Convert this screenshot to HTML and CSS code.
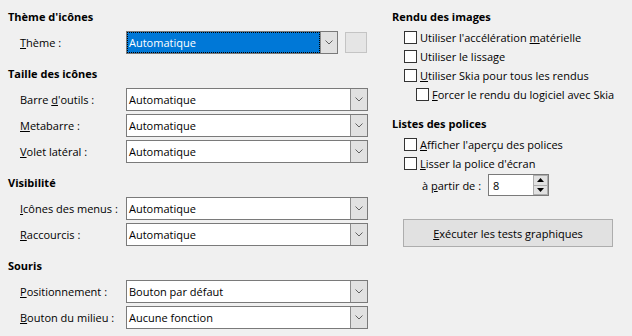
FILE: index.html
```html
<!DOCTYPE html>
<html lang="fr">
<head>
    <meta charset="UTF-8">
    <title>Affichage</title>
    <link rel="stylesheet" href="styles.css">
</head>
<body>
    <div class="page">
        <div class="col col-left">
            <section class="group">
                <h2 class="group-title">Thème d'icônes</h2>
                <div class="field">
                    <span class="field-label"><u>T</u>hème :</span>
                    <div class="combo combo-short focused">
                        <span class="combo-text">Automatique</span>
                        <span class="combo-btn"><svg width="8" height="5" viewBox="0 0 8 5"><polyline points="0.5,0.5 4,4 7.5,0.5" /></svg></span>
                    </div>
                    <button type="button" class="square-btn"></button>
                </div>
            </section>

            <section class="group">
                <h2 class="group-title">Taille des icônes</h2>
                <div class="field">
                    <span class="field-label">Barre <u>d</u>'outils :</span>
                    <div class="combo">
                        <span class="combo-text">Automatique</span>
                        <span class="combo-btn"><svg width="8" height="5" viewBox="0 0 8 5"><polyline points="0.5,0.5 4,4 7.5,0.5" /></svg></span>
                    </div>
                </div>
                <div class="field">
                    <span class="field-label"><u>M</u>etabarre :</span>
                    <div class="combo">
                        <span class="combo-text">Automatique</span>
                        <span class="combo-btn"><svg width="8" height="5" viewBox="0 0 8 5"><polyline points="0.5,0.5 4,4 7.5,0.5" /></svg></span>
                    </div>
                </div>
                <div class="field">
                    <span class="field-label"><u>V</u>olet latéral :</span>
                    <div class="combo">
                        <span class="combo-text">Automatique</span>
                        <span class="combo-btn"><svg width="8" height="5" viewBox="0 0 8 5"><polyline points="0.5,0.5 4,4 7.5,0.5" /></svg></span>
                    </div>
                </div>
            </section>

            <section class="group">
                <h2 class="group-title">Visibilité</h2>
                <div class="field">
                    <span class="field-label"><u>I</u>cônes des menus :</span>
                    <div class="combo">
                        <span class="combo-text">Automatique</span>
                        <span class="combo-btn"><svg width="8" height="5" viewBox="0 0 8 5"><polyline points="0.5,0.5 4,4 7.5,0.5" /></svg></span>
                    </div>
                </div>
                <div class="field">
                    <span class="field-label"><u>R</u>accourcis :</span>
                    <div class="combo">
                        <span class="combo-text">Automatique</span>
                        <span class="combo-btn"><svg width="8" height="5" viewBox="0 0 8 5"><polyline points="0.5,0.5 4,4 7.5,0.5" /></svg></span>
                    </div>
                </div>
            </section>

            <section class="group">
                <h2 class="group-title">Souris</h2>
                <div class="field">
                    <span class="field-label"><u>P</u>ositionnement :</span>
                    <div class="combo">
                        <span class="combo-text">Bouton par défaut</span>
                        <span class="combo-btn"><svg width="8" height="5" viewBox="0 0 8 5"><polyline points="0.5,0.5 4,4 7.5,0.5" /></svg></span>
                    </div>
                </div>
                <div class="field">
                    <span class="field-label"><u>B</u>outon du milieu :</span>
                    <div class="combo">
                        <span class="combo-text">Aucune fonction</span>
                        <span class="combo-btn"><svg width="8" height="5" viewBox="0 0 8 5"><polyline points="0.5,0.5 4,4 7.5,0.5" /></svg></span>
                    </div>
                </div>
            </section>
        </div>

        <div class="col col-right">
            <section class="group">
                <h2 class="group-title tight">Rendu des images</h2>
                <div class="check"><span class="box"></span><span>Utiliser l'accélération <u>m</u>atérielle</span></div>
                <div class="check"><span class="box"></span><span>Utiliser le lissa<u>g</u>e</span></div>
                <div class="check"><span class="box"></span><span><u>U</u>tiliser Skia pour tous les rendus</span></div>
                <div class="check sub"><span class="box"></span><span><u>F</u>orcer le rendu du logiciel avec Skia</span></div>
            </section>

            <section class="group group-fonts">
                <h2 class="group-title tight">Listes des polices</h2>
                <div class="check"><span class="box"></span><span><u>A</u>fficher l'aperçu des polices</span></div>
                <div class="check"><span class="box"></span><span><u>L</u>isser la police d'écran</span></div>
                <div class="spin-row">
                    <span class="spin-label">à <u>p</u>artir de :</span>
                    <div class="spin">
                        <span class="spin-value">8</span>
                        <span class="spin-btns">
                            <span class="spin-up"><svg width="7" height="4" viewBox="0 0 7 4"><polygon points="3.5,0 7,4 0,4" /></svg></span>
                            <span class="spin-down"><svg width="7" height="4" viewBox="0 0 7 4"><polygon points="0,0 7,0 3.5,4" /></svg></span>
                        </span>
                    </div>
                </div>
            </section>

            <button type="button" class="test-btn"><u>E</u>xécuter les tests graphiques</button>
        </div>
    </div>
</body>
</html>
```

FILE: styles.css
```css
/* General Reset */
* {
    margin: 0;
    padding: 0;
    box-sizing: border-box;
}

body {
    font-family: "Open Sans", "Liberation Sans", sans-serif;
    font-size: 11px;
    color: #000;
    background-color: #f0f0f0;
    width: 632px;
    height: 336px;
    overflow: hidden;
}

.page {
    display: flex;
    gap: 24px;
    padding: 9px 0 0 8px;
}

.col-left {
    width: 360px;
}

.col-right {
    width: 232px;
}

.group + .group {
    margin-top: 12px;
}

.group-title {
    font-size: 11px;
    font-weight: 700;
    line-height: 16px;
    margin-bottom: 6px;
}

.group-title.tight {
    margin-bottom: 3px;
}

/* left column: label + combo rows */
.field {
    display: flex;
    align-items: center;
    height: 23px;
    padding-left: 12px;
}

.field + .field {
    margin-top: 3px;
}

.field-label {
    width: 106px;
    white-space: nowrap;
}

.combo {
    display: flex;
    width: 242px;
    height: 23px;
    border: 1px solid #7a7a7a;
    background-color: #fff;
}

.combo-short {
    width: 212px;
}

.combo-text {
    flex: 1;
    display: flex;
    align-items: center;
    padding-left: 2px;
    white-space: nowrap;
}

.combo.focused .combo-text {
    background-color: #0078d7;
    color: #fff;
    outline: 1px dotted #000;
    outline-offset: -1px;
}

.combo-btn {
    width: 17px;
    display: flex;
    align-items: center;
    justify-content: center;
    background-color: #e1e1e1;
    border-left: 1px solid #8c8c8c;
}

.combo-btn svg polyline {
    fill: none;
    stroke: #606060;
    stroke-width: 1;
}

.square-btn {
    width: 22px;
    height: 21px;
    margin-left: 7px;
    background-color: #e5e5e5;
    border: 1px solid #c4c4c4;
}

/* right column: checkboxes */
.check {
    display: flex;
    align-items: center;
    height: 19px;
    padding-left: 12px;
    white-space: nowrap;
}

.check.sub {
    padding-left: 24px;
}

.box {
    width: 13px;
    height: 13px;
    margin-right: 3px;
    border: 1px solid #333;
    background-color: #fff;
}

.group-fonts {
    margin-top: 13px;
}

.spin-row {
    display: flex;
    align-items: center;
    height: 22px;
    margin-top: 1px;
    padding-left: 30px;
}

.spin-label {
    width: 66px;
    white-space: nowrap;
}

.spin {
    display: flex;
    width: 61px;
    height: 22px;
    border: 1px solid #7a7a7a;
    background-color: #fff;
}

.spin-value {
    flex: 1;
    display: flex;
    align-items: center;
    padding-left: 4px;
}

.spin-btns {
    width: 15px;
    display: flex;
    flex-direction: column;
}

.spin-up, .spin-down {
    flex: 1;
    display: flex;
    align-items: center;
    justify-content: center;
    background-color: #e1e1e1;
    border: 1px solid #adadad;
}

.spin-down {
    border-top: none;
}

.spin-btns svg polygon {
    fill: #000;
}

.test-btn {
    display: block;
    width: 210px;
    height: 28px;
    margin: 23px 0 0 11px;
    font-family: inherit;
    font-size: 11px;
    color: #000;
    background-color: #e1e1e1;
    border: 1px solid #adadad;
}
```
